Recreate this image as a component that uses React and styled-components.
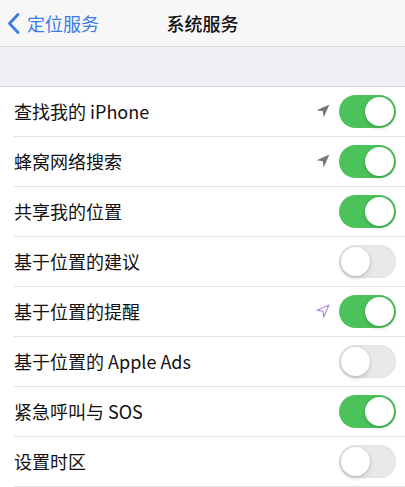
import React from "react";
import styled, { createGlobalStyle } from "styled-components";

const GlobalStyle = createGlobalStyle`
  html, body {
    margin: 0;
    padding: 0;
    background: #ffffff;
  }
  body {
    font-family: "Noto Sans CJK SC", "Liberation Sans", sans-serif;
    -webkit-font-smoothing: antialiased;
  }
`;

const Page = styled.div`
  width: 405px;
  height: 487px;
  overflow: hidden;
  background: #ffffff;
`;

const NavBar = styled.div`
  height: 46px;
  background: #f7f7f8;
  border-bottom: 1px solid #dcdcdf;
  display: grid;
  grid-template-columns: 1fr auto 1fr;
  align-items: center;
`;

const Back = styled.div`
  display: flex;
  align-items: center;
  gap: 7px;
  padding-left: 7px;
  color: #3b7be4;
  font-size: 18px;
  line-height: 1;
`;

const Title = styled.div`
  font-size: 18px;
  font-weight: 500;
  color: #111111;
  line-height: 1;
  margin-top: -1px;
`;

const Band = styled.div`
  height: 39px;
  background: #efeff4;
  border-bottom: 1px solid #d9d9dd;
`;

const List = styled.div`
  background: #ffffff;
`;

const Row = styled.div`
  height: 50px;
  display: flex;
  align-items: center;
  margin-left: 14px;
  padding-right: 9px;
  border-bottom: 1px solid #e3e3e6;
  box-sizing: border-box;
`;

const Label = styled.div`
  flex: 1;
  font-size: 18px;
  color: #111111;
  line-height: 1;
  margin-top: -1px;
`;

const Arrow = styled.svg`
  width: 14px;
  height: 14px;
  margin-right: 9px;
  margin-top: -2px;
`;

const Track = styled.div`
  position: relative;
  width: 57px;
  height: 33px;
  border-radius: 17px;
  box-sizing: border-box;
  background: ${(p) => (p.$on ? "#4cc35a" : "#e9e9eb")};
  box-shadow: ${(p) => (p.$on ? "none" : "inset 0 0 0 1px #e2e2e4")};
`;

const Knob = styled.div`
  position: absolute;
  top: 2px;
  left: ${(p) => (p.$on ? "26px" : "2px")};
  width: 29px;
  height: 29px;
  border-radius: 50%;
  background: #ffffff;
  box-shadow: 0 2px 4px rgba(0, 0, 0, 0.18), 0 0 0 0.5px rgba(0, 0, 0, 0.08);
`;

const Toggle = ({ on }) => (
  <Track $on={on}>
    <Knob $on={on} />
  </Track>
);

const LocationArrow = ({ outline }) => (
  <Arrow viewBox="0 0 14 14">
    {outline ? (
      <path
        d="M13 1 L1 6.3 L6.9 7.1 L7.7 13 Z"
        fill="none"
        stroke="#b48fdc"
        strokeWidth="1.2"
        strokeLinejoin="round"
      />
    ) : (
      <path d="M13.4 0.6 L0.6 6.3 L6.8 7.2 L7.7 13.4 Z" fill="#76767b" />
    )}
  </Arrow>
);

const rows = [
  { label: "查找我的 iPhone", on: true, arrow: "solid" },
  { label: "蜂窝网络搜索", on: true, arrow: "solid" },
  { label: "共享我的位置", on: true },
  { label: "基于位置的建议", on: false },
  { label: "基于位置的提醒", on: true, arrow: "outline" },
  { label: "基于位置的 Apple Ads", on: false },
  { label: "紧急呼叫与 SOS", on: true },
  { label: "设置时区", on: false },
];

export default function App() {
  return (
    <Page>
      <GlobalStyle />
      <NavBar>
        <Back>
          <svg width="13" height="21" viewBox="0 0 13 21">
            <path
              d="M11 1.5 L2.5 10.5 L11 19.5"
              fill="none"
              stroke="#3b7be4"
              strokeWidth="2.8"
              strokeLinecap="round"
              strokeLinejoin="round"
            />
          </svg>
          <span>定位服务</span>
        </Back>
        <Title>系统服务</Title>
        <div />
      </NavBar>
      <Band />
      <List>
        {rows.map((r) => (
          <Row key={r.label}>
            <Label>{r.label}</Label>
            {r.arrow && <LocationArrow outline={r.arrow === "outline"} />}
            <Toggle on={r.on} />
          </Row>
        ))}
      </List>
    </Page>
  );
}
